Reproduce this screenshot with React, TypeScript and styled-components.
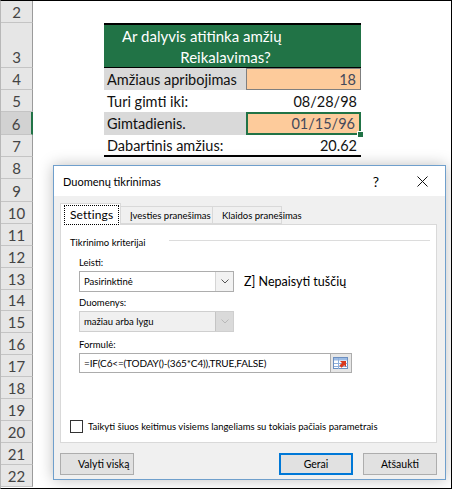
import styled, { createGlobalStyle } from 'styled-components';

const UI_FONT = `Lato, 'Liberation Sans', Arial, sans-serif`;

const GlobalStyle = createGlobalStyle`
  html, body {
    margin: 0;
    padding: 0;
    background: #fff;
  }
  body {
    font-family: ${UI_FONT};
  }
`;

// row number -> height in px
const ROW_HEIGHTS: Record<number, number> = { 2: 22, 3: 45, 6: 23, 9: 23, 14: 21 };
const ROWS = Array.from({ length: 21 }, (_, i) => i + 2);

const Frame = styled.div`
  position: relative;
  width: 450px;
  height: 487px;
  border: 1px solid #000;
  border-left-color: #b8b8b8;
  background: #fff;
  overflow: hidden;
`;

const Row = styled.div<{ $h: number }>`
  display: grid;
  grid-template-columns: 32px 71px 142px 115px 1fr;
  height: ${(p) => p.$h}px;
`;

const RowHead = styled.div<{ $selected?: boolean }>`
  box-sizing: border-box;
  display: flex;
  align-items: flex-end;
  justify-content: center;
  padding-bottom: 1px;
  background: ${(p) => (p.$selected ? '#d2d2d2' : '#e6e6e6')};
  border-right: ${(p) => (p.$selected ? '2px solid #217346' : '1px solid #9b9b9b')};
  border-bottom: 1px solid #c4c4c4;
  font-size: 15px;
  color: #444;
`;

const HeaderCell = styled.div`
  grid-column: 3 / 5;
  box-sizing: border-box;
  display: flex;
  flex-direction: column;
  justify-content: center;
  gap: 3px;
  background: #217346;
  border-top: 2px solid #000;
  border-bottom: 1px solid #000;
  color: #fff;
  font-size: 15px;
`;

const HeaderLine = styled.div<{ $center?: boolean }>`
  padding-left: ${(p) => (p.$center ? 0 : 18)}px;
  padding-right: ${(p) => (p.$center ? 14 : 0)}px;
  text-align: ${(p) => (p.$center ? 'center' : 'left')};
`;

const LabelCell = styled.div<{ $shaded?: boolean; $rule?: boolean }>`
  box-sizing: border-box;
  display: flex;
  align-items: center;
  padding-left: 3px;
  background: ${(p) => (p.$shaded ? '#d9d9d9' : 'transparent')};
  border-bottom: ${(p) => (p.$rule ? '2px solid #000' : 'none')};
  font-size: 14.5px;
  color: #111;
  white-space: nowrap;
`;

const ValueCell = styled.div<{ $input?: boolean; $active?: boolean; $rule?: boolean }>`
  position: relative;
  box-sizing: border-box;
  display: flex;
  align-items: center;
  justify-content: flex-end;
  padding-right: 4px;
  background: ${(p) => (p.$input ? '#fdcb9b' : 'transparent')};
  border: ${(p) => (p.$active ? '2px solid #217346' : p.$input ? '1px solid #7f7f7f' : 'none')};
  border-bottom: ${(p) =>
    p.$rule ? '2px solid #000' : p.$active ? '2px solid #217346' : p.$input ? '1px solid #7f7f7f' : 'none'};
  font-size: 14.5px;
  color: ${(p) => (p.$input ? '#44495a' : '#111')};
`;

const FillHandle = styled.span`
  position: absolute;
  right: -5px;
  bottom: -5px;
  width: 5px;
  height: 5px;
  background: #217346;
  border: 1px solid #fff;
`;

/* ---------- dialog ---------- */

const Dialog = styled.div`
  position: absolute;
  left: 52px;
  top: 164px;
  width: 393px;
  height: 315px;
  box-sizing: border-box;
  display: flex;
  flex-direction: column;
  background: #f0f0f0;
  border: 1px solid #6f9fcc;
  box-shadow: 0 0 14px rgba(0, 0, 0, 0.25);
  color: #000;
`;

const TitleBar = styled.div`
  display: flex;
  align-items: center;
  height: 30px;
  padding-left: 9px;
  background: #fff;
  font-size: 11px;
`;

const TitleText = styled.span`
  flex: 1;
`;

const TitleButton = styled.span`
  display: flex;
  align-items: center;
  justify-content: center;
  width: 46px;
  height: 30px;
  font-size: 14px;
`;

const Body = styled.div`
  display: flex;
  flex-direction: column;
  padding: 7px 8px 0 6px;
`;

const TabList = styled.div`
  display: flex;
  align-items: flex-end;
  height: 21px;
`;

const Tab = styled.div<{ $active?: boolean; $w: number }>`
  position: relative;
  z-index: ${(p) => (p.$active ? 2 : 1)};
  box-sizing: border-box;
  display: flex;
  align-items: center;
  width: ${(p) => p.$w}px;
  height: ${(p) => (p.$active ? 22 : 18)}px;
  margin-bottom: ${(p) => (p.$active ? -1 : 0)}px;
  padding-left: ${(p) => (p.$active ? 3 : 9)}px;
  background: ${(p) => (p.$active ? '#fff' : '#f0f0f0')};
  border: 1px solid #d9d9d9;
  border-left-width: ${(p) => (p.$active ? 1 : 0)}px;
  border-bottom: ${(p) => (p.$active ? 'none' : '1px solid #d9d9d9')};
  font-size: ${(p) => (p.$active ? 12 : 9.5)}px;
  white-space: nowrap;
`;

const FocusBox = styled.span`
  padding: 1px 5px 2px 5px;
  border: 1px dotted #000;
  letter-spacing: 0.1px;
`;

const Panel = styled.div`
  box-sizing: border-box;
  display: flex;
  flex-direction: column;
  height: 219px;
  padding: 10px 6px 0 9px;
  background: #fff;
  border: 1px solid #d9d9d9;
  font-size: 9.5px;
`;

const GroupTitle = styled.div`
  display: flex;
  align-items: center;
  gap: 23px;
  height: 14px;
  white-space: nowrap;

  &::after {
    content: '';
    flex: 1;
    height: 1px;
    background: #dcdcdc;
    margin-top: -3px;
  }
`;

const Field = styled.div`
  display: flex;
  flex-direction: column;
  padding-left: 9px;
`;

const FieldLabel = styled.div<{ $top: number }>`
  height: 14px;
  margin-top: ${(p) => p.$top}px;
  margin-bottom: 2px;
  display: flex;
  align-items: center;
`;

const SelectRow = styled.div`
  display: flex;
  align-items: center;
  gap: 10px;
`;

const Select = styled.div<{ $disabled?: boolean }>`
  box-sizing: border-box;
  display: flex;
  width: 155px;
  height: 21px;
  background: ${(p) => (p.$disabled ? '#f0f0f0' : '#fff')};
  border: 1px solid ${(p) => (p.$disabled ? '#cfcfcf' : '#adadad')};
`;

const SelectValue = styled.div`
  flex: 1;
  display: flex;
  align-items: center;
  padding-left: 4px;
`;

const SelectArrow = styled.div<{ $disabled?: boolean }>`
  display: flex;
  align-items: center;
  justify-content: center;
  width: 17px;
  background: ${(p) => (p.$disabled ? '#dadada' : '#f2f2f2')};
  border-left: 1px solid ${(p) => (p.$disabled ? '#c4c4c4' : '#d5d5d5')};
`;

const CheckText = styled.span`
  font-size: 12.5px;
`;

const FormulaRow = styled.div`
  display: flex;
`;

const FormulaInput = styled.div`
  box-sizing: border-box;
  display: flex;
  align-items: center;
  width: 252px;
  height: 20px;
  padding-left: 4px;
  background: #fff;
  border: 1px solid #acacac;
  font-size: 10px;
  letter-spacing: -0.15px;
  white-space: nowrap;
`;

const RangeButton = styled.div`
  box-sizing: border-box;
  display: flex;
  align-items: center;
  justify-content: center;
  width: 21px;
  height: 20px;
  background: #e6e6e6;
  border: 1px solid #acacac;
  border-left: none;
`;

const ApplyRow = styled.div`
  display: flex;
  align-items: center;
  gap: 5px;
  margin-top: auto;
  margin-bottom: 9px;
  white-space: nowrap;
`;

const CheckBox = styled.span`
  box-sizing: border-box;
  width: 13px;
  height: 13px;
  background: #fff;
  border: 1px solid #333;
`;

const ButtonRow = styled.div`
  display: flex;
  gap: 10px;
  margin-top: 10px;
`;

const Button = styled.div<{ $primary?: boolean; $spaced?: boolean }>`
  box-sizing: border-box;
  display: flex;
  align-items: center;
  justify-content: ${(p) => (p.$spaced ? 'flex-start' : 'center')};
  width: 74px;
  height: 22px;
  padding-left: ${(p) => (p.$spaced ? 17 : 0)}px;
  margin-right: ${(p) => (p.$spaced ? 'auto' : 0)};
  background: #e1e1e1;
  border: ${(p) => (p.$primary ? '2px solid #0078d7' : '1px solid #adadad')};
  font-size: 10.5px;
  white-space: nowrap;
`;

const Chevron = ({ color }: { color: string }) => (
  <svg width="8" height="5" viewBox="0 0 8 5">
    <polyline points="0.5,0.5 4,4 7.5,0.5" fill="none" stroke={color} strokeWidth="1" />
  </svg>
);

const CloseIcon = () => (
  <svg width="11" height="11" viewBox="0 0 11 11">
    <path d="M0.5 0.5 L10.5 10.5 M10.5 0.5 L0.5 10.5" stroke="#111" strokeWidth="1" />
  </svg>
);

// the little "pick a range" icon next to the formula box
const RangeIcon = () => (
  <svg width="16" height="13" viewBox="0 0 16 13">
    <rect x="0.5" y="0.5" width="14" height="11" fill="#fff" stroke="#6c8fc0" />
    <rect x="1" y="1" width="13" height="2.5" fill="#9cbbe4" />
    <path d="M1 6.5 H14.5 M1 9.5 H14.5 M5.5 1 V12" stroke="#8eb0dc" strokeWidth="1" />
    <polygon points="7,4 13,4 13,10 11.2,8.2 8.6,10.8 6.4,8.6 9,6" fill="#d8391e" />
  </svg>
);

const renderCells = (n: number) => {
  switch (n) {
    case 3:
      return (
        <HeaderCell>
          <HeaderLine>Ar dalyvis atitinka amžių</HeaderLine>
          <HeaderLine $center>Reikalavimas?</HeaderLine>
        </HeaderCell>
      );
    case 4:
      return (
        <>
          <LabelCell $shaded>Amžiaus apribojimas</LabelCell>
          <ValueCell $input>18</ValueCell>
        </>
      );
    case 5:
      return (
        <>
          <LabelCell>Turi gimti iki:</LabelCell>
          <ValueCell>08/28/98</ValueCell>
        </>
      );
    case 6:
      return (
        <>
          <LabelCell $shaded>Gimtadienis.</LabelCell>
          <ValueCell $input $active>
            01/15/96
            <FillHandle />
          </ValueCell>
        </>
      );
    case 7:
      return (
        <>
          <LabelCell $rule>Dabartinis amžius:</LabelCell>
          <ValueCell $rule>20.62</ValueCell>
        </>
      );
    default:
      return null;
  }
};

const App: React.FC = () => {
  return (
    <>
      <GlobalStyle />
      <Frame>
        {ROWS.map((n) => (
          <Row key={n} $h={ROW_HEIGHTS[n] ?? 22}>
            <RowHead $selected={n === 6}>{n}</RowHead>
            <div />
            {renderCells(n)}
          </Row>
        ))}

        <Dialog>
          <TitleBar>
            <TitleText>Duomenų tikrinimas</TitleText>
            <TitleButton>?</TitleButton>
            <TitleButton>
              <CloseIcon />
            </TitleButton>
          </TitleBar>

          <Body>
            <TabList>
              <Tab $active $w={61}>
                <FocusBox>Settings</FocusBox>
              </Tab>
              <Tab $w={92}>Įvesties pranešimas</Tab>
              <Tab $w={69}>Klaidos pranešimas</Tab>
            </TabList>

            <Panel>
              <GroupTitle>Tikrinimo kriterijai</GroupTitle>
              <Field>
                <FieldLabel $top={6}>Leisti:</FieldLabel>
                <SelectRow>
                  <Select>
                    <SelectValue>Pasirinktinė</SelectValue>
                    <SelectArrow>
                      <Chevron color="#555" />
                    </SelectArrow>
                  </Select>
                  <CheckText>Z] Nepaisyti tuščių</CheckText>
                </SelectRow>

                <FieldLabel $top={3}>Duomenys:</FieldLabel>
                <Select $disabled>
                  <SelectValue>mažiau arba lygu</SelectValue>
                  <SelectArrow $disabled>
                    <Chevron color="#b8b8b8" />
                  </SelectArrow>
                </Select>

                <FieldLabel $top={5}>Formulė:</FieldLabel>
                <FormulaRow>
                  <FormulaInput>=IF(C6&lt;=(TODAY()-(365*C4)),TRUE,FALSE)</FormulaInput>
                  <RangeButton>
                    <RangeIcon />
                  </RangeButton>
                </FormulaRow>
              </Field>

              <ApplyRow>
                <CheckBox />
                Taikyti šiuos keitimus visiems langeliams su tokiais pačiais parametrais
              </ApplyRow>
            </Panel>

            <ButtonRow>
              <Button $spaced>Valyti viską</Button>
              <Button $primary>Gerai</Button>
              <Button>Atšaukti</Button>
            </ButtonRow>
          </Body>
        </Dialog>
      </Frame>
    </>
  );
};

export default App;
